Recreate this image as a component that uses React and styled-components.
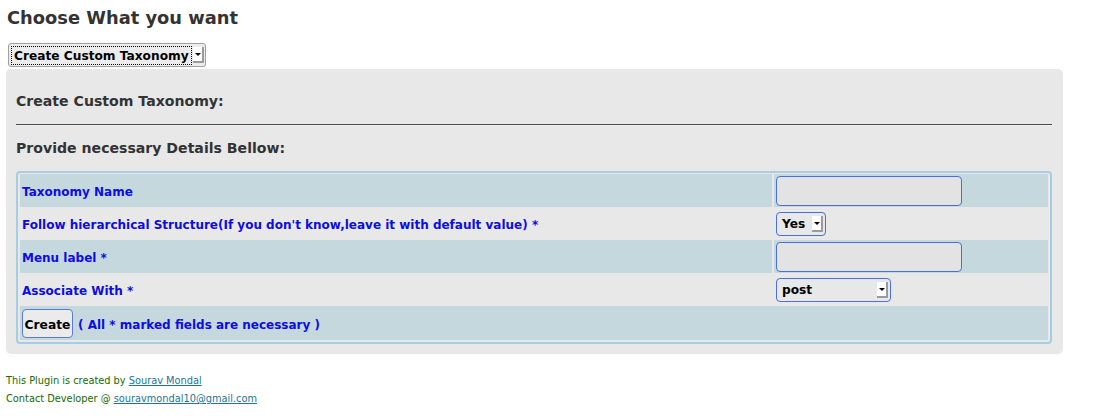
import React from "react";
import styled, { createGlobalStyle } from "styled-components";

const Global = createGlobalStyle`
  html, body { margin: 0; padding: 0; background: #ffffff; }
  body { font-family: "DejaVu Sans", "Liberation Sans", sans-serif; }
`;

const Page = styled.div`
  padding: 0 50px 0 6px;
  width: 1057px;
`;

const Title = styled.h2`
  margin: 0;
  padding: 7px 0 0 1px;
  height: 37px;
  box-sizing: border-box;
  font-size: 17.85px;
  font-weight: bold;
  color: #333333;
  line-height: 22px;
`;

const SelectFrame = styled.div`
  display: inline-flex;
  align-items: center;
  box-sizing: border-box;
  height: ${(p) => p.$h}px;
  width: ${(p) => p.$w}px;
  border: 1px solid ${(p) => p.$border};
  border-radius: ${(p) => p.$radius}px;
  background: ${(p) => p.$bg};
  padding: 2px 2px 2px 3px;
  font-size: 12.2px;
  font-weight: bold;
  color: #000;
  gap: 2px;
`;

const SelectValue = styled.span`
  flex: 1;
  line-height: 16px;
  padding: 1px 2px 0 2px;
  outline: ${(p) => (p.$focus ? "1px dotted #000" : "none")};
  white-space: nowrap;
`;

const ArrowBox = styled.span`
  width: 11px;
  height: 16px;
  background: #ffffff;
  box-shadow: inset -2px -2px 0 #9a9a9a;
  display: flex;
  align-items: center;
  justify-content: center;
  padding: 0 1px 1px 0;
  box-sizing: border-box;
  flex: none;
`;

const Triangle = styled.span`
  width: 0;
  height: 0;
  border-left: 3px solid transparent;
  border-right: 3px solid transparent;
  border-top: 3px solid #000;
`;

const TopSelectRow = styled.div`
  padding: 6px 0 2px 2px;
  height: 32px;
  box-sizing: border-box;
`;

const Panel = styled.div`
  background: #e8e8e8;
  border-radius: 5px;
  padding: 10px 10px 10px 10px;
  box-sizing: border-box;
  width: 1057px;
`;

const SectionTitle = styled.h3`
  margin: 0;
  font-size: 14.1px;
  font-weight: bold;
  color: #333333;
  line-height: 18px;
  padding: 13px 0 14px 0;
`;

const Rule = styled.hr`
  margin: 0;
  border: 0;
  border-top: 1px solid #4a4a4a;
  border-bottom: 1px solid #f4f4f4;
  width: 1036px;
`;

const Table = styled.table`
  border: 2px solid #a6cde2;
  border-radius: 4px;
  border-spacing: 2px 0;
  padding: 1px 0 2px 0;
  width: 1036px;
  box-sizing: border-box;
  table-layout: fixed;
`;

const Column = styled.col`
  width: ${(p) => p.$w}px;
`;

const Cell = styled.td`
  background: ${(p) => (p.$alt ? "transparent" : "#c4d8de")};
  height: ${(p) => p.$h || 33}px;
  padding: 0 2px;
  vertical-align: middle;
  box-sizing: border-box;
`;

const Label = styled.span`
  color: #0c0ce6;
  font-size: 12px;
  font-weight: bold;
`;

const Note = styled(Label)`
  padding-top: 3px;
`;

const TextInput = styled.input`
  width: 186px;
  height: 30px;
  box-sizing: border-box;
  border: 1px solid #4a6fe0;
  border-radius: 4px;
  background: #e3e3e3;
  margin: 0;
  display: block;
`;

const Button = styled.button`
  height: 29px;
  width: 51px;
  box-sizing: border-box;
  border: 1px solid #5b7ad6;
  border-radius: 4px;
  background: #ebebeb;
  font-family: "DejaVu Sans", sans-serif;
  font-size: 12.3px;
  font-weight: bold;
  color: #000;
  padding: 3px 0 0 0;
  margin: 0 5px 0 0;
`;

const ActionCell = styled.div`
  display: flex;
  align-items: center;
`;

const Footer = styled.div`
  padding: 18px 0 0 0;
  font-size: 9.8px;
  line-height: 18px;
  color: #166b00;
`;

const Link = styled.a`
  color: #21759b;
  text-decoration: underline;
`;

function FakeSelect({ value, w, h = 24, border = "#4a6fe0", radius = 4, bg = "#e8e8e8", focus }) {
  return (
    <SelectFrame $w={w} $h={h} $border={border} $radius={radius} $bg={bg}>
      <SelectValue $focus={focus}>{value}</SelectValue>
      <ArrowBox>
        <Triangle />
      </ArrowBox>
    </SelectFrame>
  );
}

export default function App() {
  return (
    <Page>
      <Global />
      <Title>Choose What you want</Title>
      <TopSelectRow>
        <FakeSelect value="Create Custom Taxonomy" w={198} h={24} border="#a0a0a0" radius={3} bg="#ececec" focus />
      </TopSelectRow>
      <Panel>
        <SectionTitle>Create Custom Taxonomy:</SectionTitle>
        <Rule />
        <SectionTitle>Provide necessary Details Bellow:</SectionTitle>
        <Table>
          <colgroup>
            <Column $w={752} />
            <Column $w={274} />
          </colgroup>
          <tbody>
            <tr>
              <Cell><Label>Taxonomy Name</Label></Cell>
              <Cell><TextInput type="text" /></Cell>
            </tr>
            <tr>
              <Cell $alt><Label>Follow hierarchical Structure(If you don't know,leave it with default value) *</Label></Cell>
              <Cell $alt><FakeSelect value="Yes" w={50} /></Cell>
            </tr>
            <tr>
              <Cell><Label>Menu label *</Label></Cell>
              <Cell><TextInput type="text" /></Cell>
            </tr>
            <tr>
              <Cell $alt><Label>Associate With *</Label></Cell>
              <Cell $alt><FakeSelect value="post" w={115} /></Cell>
            </tr>
            <tr>
              <Cell colSpan={2} $h={34}>
                <ActionCell>
                  <Button>Create</Button>
                  <Note>( All * marked fields are necessary )</Note>
                </ActionCell>
              </Cell>
            </tr>
          </tbody>
        </Table>
      </Panel>
      <Footer>
        <div>This Plugin is created by <Link href="#">Sourav Mondal</Link></div>
        <div>Contact Developer @ <Link href="#">souravmondal10@gmail.com</Link></div>
      </Footer>
    </Page>
  );
}
